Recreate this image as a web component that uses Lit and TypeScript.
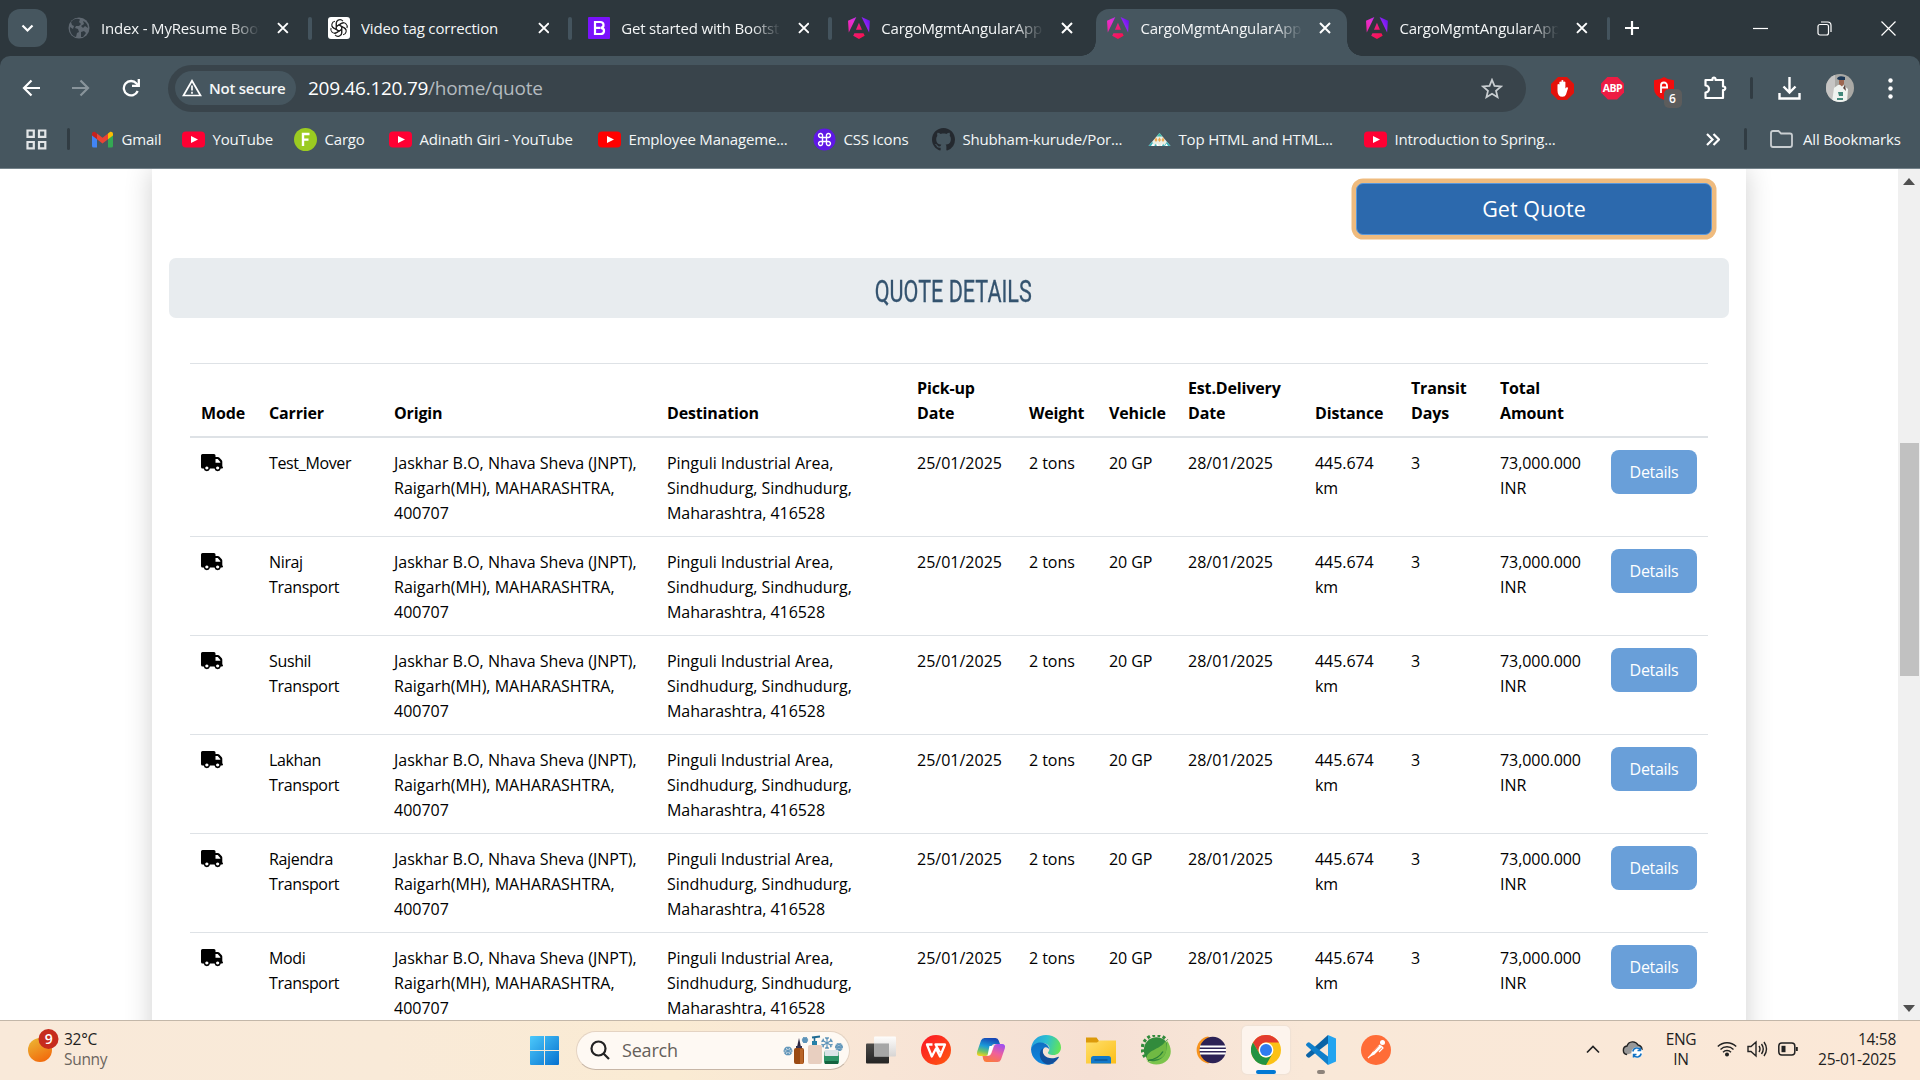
import { LitElement, html, css, svg } from "lit";
import { customElement } from "lit/decorators.js";

const X = svg`<path d="M1 1L11 11M11 1L1 11" stroke="#fff" stroke-width="2" fill="none"/>`;

const youtube = (c: string) => html`<svg class="bi" viewBox="0 0 23 23">
  <rect x="0" y="3.500" width="23" height="16" rx="4" fill=${c}></rect>
  <path d="M9 8l7 3.500-7 3.500z" fill="#fff"></path></svg>`;

const angular = html`<svg class="fav" viewBox="0 0 223 236" preserveAspectRatio="none">
  <defs><linearGradient id="g" gradientUnits="userSpaceOnUse" x1="0" y1="180" x2="223" y2="60">
    <stop offset="0" stop-color="#f0209c"></stop><stop offset=".4" stop-color="#e62fd0"></stop><stop offset=".7" stop-color="#a52cf5"></stop><stop offset="1" stop-color="#6a14f0"></stop></linearGradient>
    <linearGradient id="h" gradientUnits="userSpaceOnUse" x1="50" y1="100" x2="170" y2="220"><stop offset="0" stop-color="#e8228c"></stop><stop offset="1" stop-color="#fb0f4a"></stop></linearGradient></defs>
  <path fill="url(#g)" d="M222 39.200L214 165.100 137.400 0zM7.900 165.100L0 39.200 84.700 0z"></path>
  <path fill="url(#h)" d="M169 202l-58 33-58-33 11.800-28.500h92.300zM111 62.700l30.400 73.800H80.700z"></path></svg>`;

const globe = html`<svg class="fav" viewBox="0 0 22 22"><circle cx="11" cy="11" r="10.500" fill="#5f6871"></circle>
  <path d="M3 5C6 1 10 1.500 12 2.500L11 5l2 2-2 2H8l-1 2 3 1 1 3-2 1-1 4C4 19 1.500 15 2 10l3 2 1-3-2-1zM15 4c3 1 5 4 5 7l-3-2-2 2-2-2 3-2zM13 15l3-1 2 2-3 4-2 0z" fill="#2f3940"></path></svg>`;

const openai = html`<svg class="fav" viewBox="0 0 22 22"><rect width="22" height="22" rx="3" fill="#fff"></rect>
  <g fill="none" stroke="#222" stroke-width="1.100" stroke-linejoin="round">
  ${[0, 60, 120, 180, 240, 300].map(a => svg`<path transform="rotate(${a} 11 11)" d="M8.300 12.600V6.300a3.700 3.700 0 0 1 6.600-2.200M8.300 9.500l5.400-3.200a3.700 3.700 0 0 1 2.300-.5"/>`)}</g></svg>`;

const bootstrap = html`<svg class="fav" viewBox="0 0 22 22"><rect width="22" height="22" rx="1" fill="#7a12fb"></rect>
  <path d="M7 5h5.200c4.300 0 4.300 5.300.8 5.800 4.300.5 4 6.200-.7 6.200H7zM7 10.800h5.500" fill="none" stroke="#fff" stroke-width="2.200"></path></svg>`;

const TABS = [
  { icon: globe, title: "Index - MyResume Boot", fade: true },
  { icon: openai, title: "Video tag correction", fade: false },
  { icon: bootstrap, title: "Get started with Bootstr", fade: true },
  { icon: angular, title: "CargoMgmtAngularApp", fade: true },
  { icon: angular, title: "CargoMgmtAngularApp", fade: true, active: true },
  { icon: angular, title: "CargoMgmtAngularApp", fade: true },
];

const gmail = html`<svg class="bi" viewBox="0 0 23 23"><path d="M1 5v13q0 1.500 1.500 1.500H6V9z" fill="#4285f4"></path>
  <path d="M22 5v13q0 1.500-1.500 1.500H17V9z" fill="#34a853"></path>
  <path d="M6 5.500l5.500 4.300L17 5.500v5.800l-5.500 4.300L6 11.300z" fill="#ea4335"></path>
  <path d="M17 5.500l1.600-1.200C20 3.200 22 4 22 6v1.600l-5 3.700z" fill="#fbbc04"></path>
  <path d="M6 5.500L4.400 4.300C3 3.200 1 4 1 6v1.600l5 3.700z" fill="#c5221f"></path></svg>`;
const cargo = html`<svg class="bi" viewBox="0 0 23 23"><circle cx="11.500" cy="11.500" r="11.500" fill="#9bcb21"></circle>
  <path d="M9 18V6h6.500M9 11.600h5.500" fill="none" stroke="#fff" stroke-width="2.400"></path></svg>`;
const cssicon = html`<svg class="bi" viewBox="0 0 23 23"><circle cx="11.500" cy="11.500" r="11" fill="#5f17e6"></circle>
  <path d="M9.500 9.500V8a2 2 0 1 0-2 1.500h8a2 2 0 1 0-2-1.500v7a2 2 0 1 0 2-1.500h-8a2 2 0 1 0 2 1.500z" fill="none" stroke="#fff" stroke-width="1.400"></path></svg>`;
const github = html`<svg class="bi" viewBox="0 0 16 16"><path fill="#24292f" d="M8 0C3.580 0 0 3.580 0 8c0 3.540 2.290 6.530 5.470 7.590.4.070.55-.17.55-.38 0-.19-.01-.82-.01-1.490-2.010.37-2.530-.49-2.690-.94-.09-.23-.48-.94-.82-1.130-.28-.15-.68-.52-.01-.53.63-.01 1.080.58 1.230.82.72 1.210 1.870.87 2.330.66.07-.52.28-.87.51-1.070-1.780-.2-3.640-.89-3.640-3.950 0-.87.31-1.590.82-2.150-.08-.2-.36-1.020.08-2.120 0 0 .67-.21 2.200.82.64-.18 1.320-.27 2-.27s1.360.09 2 .27c1.530-1.040 2.200-.82 2.200-.82.44 1.100.16 1.920.08 2.120.51.56.82 1.270.82 2.150 0 3.070-1.870 3.750-3.650 3.950.29.25.54.73.54 1.480 0 1.070-.01 1.930-.01 2.200 0 .21.15.46.55.38A8.010 8.010 0 0 0 16 8c0-4.420-3.580-8-8-8z"></path></svg>`;
const hills = html`<svg class="bi" viewBox="0 0 23 23"><path d="M11.500 5L22.500 18H.500z" fill="#e9efe4"></path>
  <path d="M11.500 5l3 3.600h-6z" fill="#3fb6a8"></path><path d="M4 13.700l3 4.300H.500zM19 13.700l3.500 4.300H16z" fill="#3eb3b8"></path>
  <path d="M8 9.300l1.500 2.700L8 14l-1.500-2zM11.500 9.300l1.500 2.700-1.500 2-1.500-2zM15 9.300l1.500 2.700-1.500 2-1.500-2z" fill="#f0a850"></path><path d="M3 18l2-3 2 3zM8 18l1.500-2.500 1.500 2.500zM12.500 18l1.500-2.500 1.500 2.500zM17 18l1.500-2.500 1.500 2.500z" fill="#fff"></path><path d="M6.500 18l1.200-2.200 1.200 2.200zM14 18l1.200-2.200 1.200 2.200z" fill="#3eb3b8"></path></svg>`;

const BOOKMARKS = [
  { icon: gmail, text: "Gmail", w: 91 },
  { icon: youtube("#f03"), text: "YouTube", w: 112 },
  { icon: cargo, text: "Cargo", w: 95 },
  { icon: youtube("#f03"), text: "Adinath Giri - YouTube", w: 209 },
  { icon: youtube("#f00"), text: "Employee Manageme...", w: 215 },
  { icon: cssicon, text: "CSS Icons", w: 119 },
  { icon: github, text: "Shubham-kurude/Por...", w: 216 },
  { icon: hills, text: "Top HTML and HTML...", w: 216 },
  { icon: youtube("#f03"), text: "Introduction to Spring...", w: 200 },
];

const CARRIERS = [["Test_Mover"], ["Niraj", "Transport"], ["Sushil", "Transport"], ["Lakhan", "Transport"], ["Rajendra", "Transport"], ["Modi", "Transport"]];
const HEADS = [["Mode"], ["Carrier"], ["Origin"], ["Destination"], ["Pick-up", "Date"], ["Weight"], ["Vehicle"], ["Est.Delivery", "Date"], ["Distance"], ["Transit", "Days"], ["Total", "Amount"], [""]];
const lines = (a: string[]) => a.map(t => html`<div class="ln">${t}</div>`);

@customElement("browser-tabs")
class BrowserTabs extends LitElement {
  static styles = css`
    :host { display: flex; height: 56px; background: #2d373d; color: #f4f6f7; font: 15px "Open Sans", sans-serif; letter-spacing: -0.170px; }
    .drop { width: 39px; height: 38px; margin: 9px 5px 0 8px; border-radius: 12px; background: #46565f; display: grid; place-items: center; flex: none; }
    .tab { width: 260.100px; height: 56px; flex: none; display: flex; align-items: center; box-sizing: border-box; padding: 0 0 0 16px; }
    .fav { width: 22px; height: 22px; flex: none; margin-right: 11px; }
    .title { width: 166px; overflow: hidden; white-space: nowrap; }
    .fade { -webkit-mask-image: linear-gradient(90deg, #000 80%, transparent 98%); mask-image: linear-gradient(90deg, #000 80%, transparent 98%); }
    .close { width: 12px; height: 12px; margin-left: 14px; }
    .sep { width: 4px; height: 23px; margin-left: 19px; border-radius: 2px; background: #44545e; }
    .active { background: #46565f; height: 47px; margin: 9px 3px 0 4px; width: 251px; border-radius: 13px 13px 0 0; padding: 0 0 9px 11px; position: relative; }
    .active .close { margin-left: 13px; }
    .active::before, .active::after { content: ""; position: absolute; bottom: 0; width: 15px; height: 15px; }
    .active::before { left: -15px; background: radial-gradient(circle at 0 0, transparent 14.500px, #46565f 15px); }
    .active::after { right: -15px; background: radial-gradient(circle at 100% 0, transparent 14.500px, #46565f 15px); }
    .plus { margin: 20px 0 0 14px; width: 16px; height: 16px; }
    .wc { margin-left: auto; margin-right: 24px; display: flex; gap: 49px; align-items: center; }
  `;
  render() {
    return html`<div class="drop"><svg width="13" height="9" viewBox="0 0 13 9"><path d="M1.500 1.500l5 5 5-5" fill="none" stroke="#fff" stroke-width="2.200"></path></svg></div>
      ${TABS.map((t, i) => html`<div class="tab ${t.active ? "active" : ""}">${t.icon}<span class="title ${t.fade ? "fade" : ""}">${t.title}</span>
        <svg class="close" viewBox="0 0 12 12">${X}</svg>${i === 3 || t.active ? "" : html`<i class="sep"></i>`}</div>`)}
      <svg class="plus" viewBox="0 0 16 16"><path d="M8 1v14M1 8h14" stroke="#fff" stroke-width="2.200"></path></svg>
      <div class="wc">
        <svg width="15" height="15"><path d="M0 7.500h15" stroke="#fff" stroke-width="1.200"></path></svg>
        <svg width="15" height="15" fill="none" stroke="#fff" stroke-width="1.200"><rect x="1" y="3.500" width="10.500" height="10.500" rx="2"></rect><path d="M4 1h6.500q3.500 0 3.500 3.500V11"></path></svg>
        <svg width="15" height="15"><path d="M.500.500l14 14M14.500.500l-14 14" stroke="#fff" stroke-width="1.200"></path></svg>
      </div>`;
  }
}

@customElement("browser-toolbar")
class BrowserToolbar extends LitElement {
  static styles = css`
    :host { display: block; background: #2d373d; }
    .wrap { background: #46565f; border-radius: 10px 10px 0 0; height: 112px; border-bottom: 1px solid #74828a; display: flex; flex-direction: column; font-family: "Open Sans", sans-serif; color: #f4f6f7; }
    .nav { display: flex; height: 64px; align-items: center; flex: none; }
    .nav svg { flex: none; display: block; }
    .back { margin-left: 22px; } .fwd { margin-left: 30px; } .reload { margin-left: 32px; }
    .omni { width: 1358px; height: 47px; margin-left: 27px; background: #39444b; border-radius: 24px; display: flex; align-items: center; box-sizing: border-box; padding-left: 7px; flex: none; }
    .chip { width: 121px; height: 34px; border-radius: 17px; background: #46565f; display: flex; align-items: center; gap: 7px; box-sizing: border-box; padding-left: 7px; font-size: 15px; font-weight: 600; letter-spacing: -0.25px; white-space: nowrap; }
    .chip svg, .url { position: relative; }
    .url { margin-left: 12px; font-size: 19px; letter-spacing: -0.27px; white-space: nowrap; color: #b3babf; }
    .url b { font-weight: 400; color: #fff; }
    .star { margin-left: auto; margin-right: 23px; }
    .ext { display: grid; grid-template-columns: 50px 51px 51px 51px 22px 54px 48px 52px; margin-left: 11px; align-items: center; justify-items: center; }
    .abp { width: 23px; height: 23px; background: #ee1c43; clip-path: polygon(30% 0, 70% 0, 100% 30%, 100% 70%, 70% 100%, 30% 100%, 0 70%, 0 30%); font: 700 10.500px/22px "Open Sans", sans-serif; letter-spacing: -0.5px; text-align: center; color: #fff; }
    .shield { position: relative; }
    .six { position: absolute; left: 11px; top: 12px; width: 18px; height: 19px; border-radius: 5px; background: #5c5c5c; font: 600 12px/19px "Open Sans", sans-serif; text-align: center; color: #fff; }
    .v { width: 3px; height: 22px; background: #313c43; border-radius: 2px; }
    .marks { display: flex; height: 38px; align-items: center; font-size: 15px; letter-spacing: -0.18px; white-space: nowrap; }
    .apps { margin-left: 26px; } .v1 { margin: 0 20.500px 0 20px; }
    .bm { display: flex; align-items: center; flex: none; }
    .bi { width: 23px; height: 23px; flex: none; margin-right: 8px; }
    .more { margin-left: 142.500px; } .v2 { margin: 0 23px 0 24px; } .folder { margin-right: 10px; }
  `;
  render() {
    return html`<div class="wrap"><div class="nav">
      <svg class="back" width="19" height="18" fill="none" stroke="#fff" stroke-width="2.200"><path d="M18 9H2M9.500 1.500L2 9l7.500 7.500"></path></svg>
      <svg class="fwd" width="19" height="18" fill="none" stroke="#89949b" stroke-width="2.200"><path d="M1 9h16M9.500 1.500L17 9l-7.500 7.500"></path></svg>
      <svg class="reload" width="19" height="18" fill="none" stroke="#fff" stroke-width="2.300"><path d="M15.700 12A7.200 7.200 0 1 1 14.500 4.500L16 6"></path><path d="M16.800 0v6.800H10"></path></svg>
      <div class="omni"><div class="chip"><svg width="20" height="18" fill="none" stroke="#fff" stroke-width="1.700"><path d="M10 1.800L18.500 16.500h-17zM10 6.500v5M10 12.800v2"></path></svg>Not secure</div>
        <span class="url"><b>209.46.120.79</b>/home/quote</span>
        <svg class="star" width="22" height="21" viewBox="0 0 24 23"><path d="M12 2l2.700 6.700 7.300.6-5.600 4.700 1.700 7-6.100-3.800L5.900 21l1.700-7L2 9.300l7.300-.6z" fill="none" stroke="#c9ced1" stroke-width="1.900"></path></svg></div>
      <div class="ext">
        <svg width="23" height="23" viewBox="0 0 23 23"><path d="M7 0h9l7 7v9l-7 7H7l-7-7V7z" fill="#e3120b"></path><path d="M6.500 11V7.500q.9-1 1.900 0V5q1-1.200 2 0V3.600q1-1.200 2 0V5q1-1.100 2 0v6.500l1.200-1.200q1.500-.3 1.400 1L15 17.500q-.8 2.300-3.500 2.300-5 0-5-6z" fill="#fff"></path></svg>
        <div class="abp">ABP</div>
        <div class="shield"><svg width="22" height="23" viewBox="0 0 22 23"><path d="M11 0q4 3 10 3.300v8Q21 19 11 23 1 19 1 11.500V3.300Q7 3 11 0z" fill="#f20d0d"></path><path d="M8 10V8.500a3 3 0 0 1 6 0V11M8 16v-5.500h7" fill="none" stroke="#fff" stroke-width="1.800"></path></svg><span class="six">6</span></div>
        <svg width="24" height="24" viewBox="0 0 24 24" fill="none" stroke="#fff" stroke-width="2.200"><path d="M2.500 4H9.500V3a1.500 1.500 0 0 1 3 0v1H20v6.500h.500a1.800 1.800 0 0 1 0 3.600H20V22H2.500v-5.500a3.500 3.500 0 0 0 0-7z" stroke-linejoin="round"></path></svg>
        <i class="v"></i>
        <svg width="23" height="23" fill="none" stroke="#fff" stroke-width="2.400"><path d="M11.500 0v15M5.500 9.500l6 6 6-6M1.500 16v5.500h20V16"></path></svg>
        <svg width="28" height="28" viewBox="0 0 28 28"><defs><clipPath id="c"><circle cx="14" cy="14" r="14"></circle></clipPath></defs><g clip-path="url(#c)"><rect width="28" height="28" fill="#aaa9a5"></rect><path d="M0 0h9v28H0z" fill="#c6c5c4"></path><path d="M8 14l4-3h5l5 4-1 13H6z" fill="#eff3f0"></path><path d="M13 5h5v5l-2 2.500-3-2.500z" fill="#9d6650"></path><path d="M11 5q1-4 8-2v3h-6z" fill="#1d3856"></path><path d="M12 18h5v4h-4zM11 24h6v2h-6z" fill="#41877a"></path><path d="M17 14l2-3 1 6z" fill="#594640"></path></g></svg>
        <svg width="5" height="21" fill="#fff"><circle cx="2.500" cy="2.500" r="2.200"></circle><circle cx="2.500" cy="10.500" r="2.200"></circle><circle cx="2.500" cy="18.500" r="2.200"></circle></svg>
      </div></div>
      <div class="marks">
        <svg class="apps" width="21" height="21" fill="none" stroke="#e3e6e8" stroke-width="2.200"><path d="M1.500 1.500h6.300v6.300H1.500zM13 1.500h6.300v6.300H13zM1.500 13h6.300v6.300H1.500zM13 13h6.300v6.300H13z"></path></svg>
        <i class="v v1"></i>
        ${BOOKMARKS.map(b => html`<div class="bm" style="width:${b.w}px">${b.icon}<span>${b.text}</span></div>`)}
        <svg class="more" width="14" height="13" fill="none" stroke="#fff" stroke-width="2.200"><path d="M1 1l5.500 5.500L1 12M7.500 1L13 6.500 7.500 12"></path></svg>
        <i class="v v2"></i>
        <svg class="folder" width="23" height="18" fill="none" stroke="#c9ced1" stroke-width="1.800"><path d="M1 15V3q0-2 2-2h5.500L11 3.500h9q2 0 2 2V15q0 2-2 2H3q-2 0-2-2z"></path></svg>
        <span>All Bookmarks</span>
      </div></div>`;
  }
}

@customElement("quote-page")
class QuotePage extends LitElement {
  static styles = css`
    :host { display: flex; height: 851px; overflow: hidden; background: #fff; font-family: "Open Sans", sans-serif; color: #000; }
    .area { flex: 1; overflow: hidden; }
    .card { width: 1560px; height: 900px; margin-left: 152px; padding: 14px 17px 0; box-shadow: 0 0 26px rgba(0,0,0,.19); display: flex; flex-direction: column; }
    .get { align-self: flex-end; width: 356px; height: 52px; margin-right: 17px; box-sizing: border-box; border: 1px solid #5a98dc; border-radius: 7px; background: #2c69ad; box-shadow: 0 0 0 4.500px #efbb7e; color: #fff; font-size: 21.500px; line-height: 49px; text-align: center; }
    .bar { height: 60px; margin-top: 23px; border-radius: 7px; background: #e8ecef; display: grid; place-items: center; flex: none; }
    .bar span { font: 400 32px/60px Roboto, sans-serif; height: 60px; padding-top: 3px; box-sizing: border-box; color: #34536f; -webkit-text-stroke: .3px #34536f; transform: scaleX(.675); padding-left: 13px; white-space: nowrap; }
    table { margin: 45px 0 0 21px; width: 1518px; table-layout: fixed; border-collapse: separate; border-spacing: 0; font-size: 16px; letter-spacing: -0.06px; line-height: 25.200px; }
    th, td { text-align: left; vertical-align: top; padding: 12.800px 0 9.600px 11px; white-space: nowrap; border-bottom: 1px solid #dee2e6; height: 75.600px; }
    th { vertical-align: bottom; padding: 12px 0 9.400px 11px; border-top: 1px solid #dee2e6; border-bottom: 2px solid #dee2e6; height: 50.400px; font-weight: 700; letter-spacing: -0.15px; }
    .wide { letter-spacing: 0; }
    .tight { letter-spacing: -0.35px; }
    .btn { width: 86px; height: 44px; margin-top: -0.400px; border-radius: 8px; background: #699fd9; color: #fff; text-align: center; line-height: 44px; letter-spacing: -0.3px; }
    .truck { display: block; margin-top: 3px; }
    .scroll { width: 22px; background: #f0f0f0; display: flex; flex-direction: column; align-items: center; flex: none; box-sizing: border-box; padding: 9px 0 8px; }
    .thumb { width: 19px; height: 233px; background: #c1c1c1; margin: 258px 0 auto; }
  `;
  render() {
    const w = [68, 125, 273, 250, 112, 80, 79, 127, 96, 89, 111, 108];
    return html`<div class="area"><div class="card"><div class="get">Get Quote</div><div class="bar"><span>QUOTE DETAILS</span></div>
      <table><colgroup>${w.map(n => html`<col style="width:${n}px">`)}</colgroup>
      <thead><tr>${HEADS.map(h => html`<th>${lines(h)}</th>`)}</tr></thead>
      <tbody>${CARRIERS.map(c => html`<tr>
        <td><svg class="truck" width="22" height="18" viewBox="0 0 22 18"><path d="M1.500 0H13q1.500 0 1.500 1.500V3h2.300q1 0 1.700.7l2.300 2.500q.5.600.5 1.500V12.500q.7.200.7 1 0 1-1 1h-1.200a3.200 3.200 0 0 1-6.300 0H9a3.200 3.200 0 0 1-6.300 0H1.500Q0 14.500 0 13V1.500Q0 0 1.500 0zM14.500 5v3.700h4.800V8L16.700 5zM5.800 12.400a1.600 1.600 0 1 0 .1 0zM16.600 12.400a1.600 1.600 0 1 0 .1 0z" fill-rule="evenodd"></path></svg></td>
        <td class="tight">${lines(c)}</td><td class="wide">${lines(["Jaskhar B.O, Nhava Sheva (JNPT),", "Raigarh(MH), MAHARASHTRA,", "400707"])}</td>
        <td>${lines(["Pinguli Industrial Area,", "Sindhudurg, Sindhudurg,", "Maharashtra, 416528"])}</td>
        <td class="wide">25/01/2025</td><td>2 tons</td><td>20 GP</td><td class="wide">28/01/2025</td><td>${lines(["445.674", "km"])}</td><td>3</td><td>${lines(["73,000.000", "INR"])}</td>
        <td><div class="btn">Details</div></td></tr>`)}</tbody></table></div></div>
      <div class="scroll"><svg width="12" height="7"><path d="M0 7l6-7 6 7z" fill="#505050"></path></svg><div class="thumb"></div><svg width="12" height="7"><path d="M0 0l6 7 6-7z" fill="#505050"></path></svg></div>`;
  }
}

const flake = (x: number, y: number, r: number) => svg`<g transform="translate(${x} ${y})" stroke="#5c93b8" stroke-width="1.100" fill="none">${[0, 60, 120].map(a => svg`<path transform="rotate(${a})" d="M0 ${-r}V${r}M-1.800 ${-r + 0.500}L0 ${-r + 2.200} 1.800 ${-r + 0.500}M-1.800 ${r - 0.500}L0 ${r - 2.200} 1.800 ${r - 0.500}"/>`)}</g>`;

const APPS = [
  html`<svg viewBox="0 0 30 30"><defs><linearGradient id="t1" x1="0" y1="0" x2="0" y2="1"><stop offset="0" stop-color="#4b4a48"></stop><stop offset="1" stop-color="#242424"></stop></linearGradient><linearGradient id="t2" x1="0" y1="0" x2="0" y2="1"><stop offset="0" stop-color="#fff"></stop><stop offset="1" stop-color="#d4d3d3"></stop></linearGradient></defs><rect x="0" y="8.500" width="23" height="20" rx="1" fill="url(#t1)"></rect><rect x="8" y="1.500" width="22" height="20" rx="1" fill="url(#t2)" opacity=".92"></rect><path d="M8 8.500h15v13H8z" fill="#a6a6a6"></path></svg>`,
  html`<svg viewBox="0 0 30 30"><defs><linearGradient id="w" x1="0" y1="0" x2="1" y2="1"><stop offset="0" stop-color="#fb1426"></stop><stop offset="1" stop-color="#ff5a10"></stop></linearGradient></defs><circle cx="15" cy="15" r="15" fill="url(#w)"></circle><path d="M11.500 9.500H6L10.800 21.500l4.200-8 4 8L24 9.500h-9.500L19 17.500" fill="none" stroke="#fff" stroke-width="2.300" stroke-linejoin="round"></path></svg>`,
  html`<svg viewBox="0 0 30 30"><defs><linearGradient id="k1" x1=".5" y1="0" x2=".2" y2="1"><stop offset="0" stop-color="#1747b5"></stop><stop offset=".45" stop-color="#1b9bd9"></stop><stop offset=".75" stop-color="#6cc36b"></stop><stop offset="1" stop-color="#f5d31a"></stop></linearGradient><linearGradient id="k2" x1=".8" y1="0" x2=".3" y2="1"><stop offset="0" stop-color="#a04ff0"></stop><stop offset=".5" stop-color="#f0609a"></stop><stop offset="1" stop-color="#fb7a3c"></stop></linearGradient></defs><path d="M8.500 3h11q2.500 0 3.200 2.500L24 9h-5q-3 0-4 3l-2.500 7q-.8 2-3 2H4Q0 21 1.200 16.500L5 5.500Q6 3 8.500 3z" fill="url(#k1)"></path><path d="M21.500 27h-11q-2.500 0-3.200-2.500L6.500 21h5q3 0 4-3L18 11q.8-2 3-2h5q4 0 2.800 4.500L25 24.500Q24 27 21.500 27z" fill="url(#k2)"></path><path d="M13.500 11h4L15 18q-.8 2.500-3.500 2.500z" fill="#fff"></path></svg>`,
  html`<svg viewBox="0 0 30 30"><defs><linearGradient id="e1" x1="0" y1=".3" x2="1" y2=".5"><stop offset="0" stop-color="#249de0"></stop><stop offset=".5" stop-color="#2cc0cf"></stop><stop offset="1" stop-color="#63e457"></stop></linearGradient><linearGradient id="e2" x1="0" y1="0" x2="0" y2="1"><stop offset="0" stop-color="#0e6fc4"></stop><stop offset="1" stop-color="#1188e0"></stop></linearGradient></defs><path d="M0 14C1 5 7 0 15 0c9 0 15 6 15 12.500 0 5-4 7.500-7.500 7.500-4 0-6-1.500-5.500-2.500 1.500-2 2-3.500 1-6C16 7 6 6 0 14z" fill="url(#e1)"></path><path d="M0 14C3 7 10 6.500 14 8.500c3 1.500 4.500 4 4.500 6.500-1-2.500-4-3.500-5.500-2-3 3-1 9 3.500 12 3 2 6 2 7 3C13 33 0 26 0 14z" fill="url(#e2)"></path><path d="M12.500 13c-4.500 2-5 9-1 13.500 2 2 4.500 3.500 7 3 4-1 7-3.500 9.300-7 .3-.7-.3-1-1-.6C18 26 9 20 12.500 13z" fill="#124f9b"></path></svg>`,
  html`<svg viewBox="0 0 30 30"><path d="M0 2.500h10.500l2.500 3.500h16.500V9H0z" fill="#dc9a0a"></path><defs><linearGradient id="f" x1="0" y1="0" x2="1" y2="1"><stop offset="0" stop-color="#ffdf6c"></stop><stop offset="1" stop-color="#fcbf18"></stop></linearGradient></defs><path d="M0 7.500h11l2.500-2H30V28.500H0z" fill="url(#f)"></path><path d="M5 28.500v-5q0-2.500 2.500-2.500h15q2.500 0 2.500 2.500v5z" fill="#1279ca"></path><path d="M8.500 25h13" stroke="#0b5190" stroke-width="1.300"></path></svg>`,
  html`<svg viewBox="0 0 30 30"><circle cx="15.500" cy="15" r="12.700" fill="#328b3c"></circle><path d="M4 22A13.500 13.500 0 0 1 26 5.500" fill="none" stroke="#328b3c" stroke-width="3.200" stroke-dasharray="2.900 2.400"></path><path d="M6 25.500C3 15 20 15 24.500 6 26.500 12 26 21 19 23.500 14 25 9 24 6 25.500z" fill="#70b943"></path><path d="M25.500 5C31 12 31 20 26.500 25 21 31 10 31 5.500 25.500 13 28 22 25 24.500 18 26 14 26 9 25.500 5z" fill="#7cc44c"></path><path d="M7 25.500q10-1 15-9" fill="none" stroke="#2a8039" stroke-width="1.400"></path></svg>`,
  html`<svg viewBox="0 0 30 30"><path d="M12 1.500A13.700 13.700 0 0 0 12 28.500L16 26V4z" fill="#f7941e"></path><circle cx="16.800" cy="15" r="13.200" fill="#2c2255"></circle><path d="M4 11.500h25.800M3.500 15h26.500M4 18.500h25.800" stroke="#fff" stroke-width="2"></path></svg>`,
  html`<svg viewBox="0 0 30 30"><circle cx="15" cy="15" r="15" fill="#fbc116"></circle><path d="M2 7.500A15 15 0 0 1 28 7.500H15A7.500 7.500 0 0 0 8.500 18.700z" fill="#e33b2e"></path><path d="M2 7.500A15 15 0 0 0 15 30l6.500-11.300a7.500 7.500 0 0 1-13 0z" fill="#229342"></path><circle cx="15" cy="15" r="7.400" fill="#fff"></circle><circle cx="15" cy="15" r="6" fill="#2f7cf0"></circle></svg>`,
  html`<svg viewBox="0 0 30 30"><path d="M22 0v8.500L3.500 22.500Q2.500 23 1.500 22.300L.500 21.300Q-.5 20.300.5 19.300z" fill="#0a63a6"></path><path d="M22 30v-8.500L3.500 7.500Q2.500 7 1.500 7.700L.500 8.700Q-.5 9.700.5 10.700z" fill="#0f7fcb"></path><path d="M22 0l8 3.500v23L22 30z" fill="#23a4f0"></path></svg>`,
  html`<svg viewBox="0 0 30 30"><circle cx="15" cy="15" r="15" fill="#ff6c37"></circle><circle cx="21.500" cy="7.500" r="2.500" fill="#fff"></circle><path d="M18.500 9.500l3 2-8 8-5 2.500 3-5z" fill="#fff"></path><path d="M20 11l2 2-4 4M12 18l-5 5" stroke="#fff" stroke-width="1.200" fill="none"></path><path d="M17.500 11l-5 5.500" stroke="#ff6c37" stroke-width=".8"></path></svg>`,
];

@customElement("task-bar")
class TaskBar extends LitElement {
  static styles = css`
    :host { display: flex; height: 60px; box-sizing: border-box; border-top: 1px solid #c3b7a9; background: linear-gradient(90deg, #f9e9d9 0, #f9ead8 20%, #faebd3 35%, #f8e5d6 46%, #f5e0d4 57%, #f9e8d8 68%, #fbe8d7 100%); font: 15.500px "Open Sans", sans-serif; letter-spacing: -0.3px; color: #1f1f1f; align-items: center; white-space: nowrap; }
    .wx { margin-left: 27px; width: 37px; height: 36px; flex: none; margin-bottom: 8px; }
    .two { line-height: 20px; }
    .mute { color: #6b655e; }
    .left { width: 530px; display: flex; align-items: center; flex: none; padding-bottom: 3px; box-sizing: border-box; }
    .win { width: 29px; height: 29px; flex: none; }
    .search { width: 274px; height: 39px; box-sizing: border-box; margin: 0 0 1px 17px; border: 1px solid #e4d3c2; border-bottom-color: #c7b6a6; border-radius: 20px; background: #fef9f3; display: flex; align-items: center; padding: 0 6px 0 13px; font-size: 18px; color: #655f5a; flex: none; letter-spacing: -0.2px; }
    .search span { margin-left: 12px; flex: 1; }
    .apps { display: flex; margin-left: 7px; gap: 7px; flex: none; margin-bottom: 1px; }
    .app { width: 48px; height: 48px; border-radius: 5px; display: flex; flex-direction: column; align-items: center; box-sizing: border-box; padding-top: 9px; }
    .app svg { width: 30px; height: 30px; flex: none; }
    .on { background: #fdf4ed; box-shadow: 0 0 1px 1px #efe1d5; }
    .pill { width: 20px; height: 4px; border-radius: 2px; background: #0078d4; margin-top: 5px; }
    .dot { width: 8px; height: 4px; border-radius: 2px; background: #8d837b; margin-top: 5px; }
    .tray { margin-left: auto; margin-right: 24px; display: flex; align-items: center; padding-bottom: 3px; }
    .cloud { margin-left: 22px; }
    .tray .lang { width: 40px; text-align: center; margin: 0 16px 0 17px; }
    .tray .time { text-align: right; margin-left: 20px; width: 78px; display: flex; flex-direction: column; align-items: flex-end; }
  `;
  render() {
    return html`<div class="left">
      <svg class="wx" viewBox="0 0 37 36"><defs><linearGradient id="s" x1=".2" y1="0" x2=".7" y2="1"><stop offset="0" stop-color="#ecb533"></stop><stop offset="1" stop-color="#f2680b"></stop></linearGradient></defs><circle cx="13" cy="23" r="12" fill="url(#s)"></circle><circle cx="21.500" cy="12" r="10" fill="#c62b1d"></circle><text x="21.500" y="17" text-anchor="middle" font-family="Open Sans" font-weight="600" font-size="14" fill="#fff">9</text></svg>
      <div class="two"><div>32°C</div><div class="mute">Sunny</div></div></div>
      <svg class="win" viewBox="0 0 29 29"><defs><linearGradient id="m" gradientUnits="userSpaceOnUse" x1="0" y1="0" x2="29" y2="29"><stop offset="0" stop-color="#4cc9fb"></stop><stop offset="1" stop-color="#0671cf"></stop></linearGradient></defs><path d="M0 1q0-1 1-1h13v14H0zM15 0h13q1 0 1 1v13H15zM0 15h14v14H1q-1 0-1-1zM15 15h14v13q0 1-1 1H15z" fill="url(#m)"></path></svg>
      <div class="search"><svg width="20" height="20" fill="none" stroke="#222" stroke-width="2.200"><circle cx="8.500" cy="8.500" r="7"></circle><path d="M13.500 13.500l5.500 5.500"></path></svg><span>Search</span>
        <svg width="60" height="32" viewBox="0 0 60 32">
          ${flake(5, 17, 4.500)}${flake(22, 6, 3)}${flake(44, 9, 6)}${flake(56, 13, 4)}
          <path d="M14 13l2-9 2 9z" fill="#2b2540"></path><rect x="13" y="12" width="6" height="4" fill="#37304d"></rect><rect x="11" y="14" width="10" height="16" rx="2" fill="#9a4a13"></rect><path d="M17 15h3v15h-3z" fill="#b96528"></path>
          <path d="M29 3.500l8-1" stroke="#1f6b93" stroke-width="2"></path><path d="M31.500 3v7" stroke="#1f6b93" stroke-width="1.600"></path><rect x="29" y="7" width="5" height="4" fill="#2380a8"></rect><rect x="25" y="11" width="14" height="19" rx="2" fill="#e8cfc0"></rect>
          <rect x="41" y="17" width="15" height="13" rx="2" fill="#2d9366"></rect><rect x="41.500" y="16" width="14" height="6" rx="1" fill="#dbe4e8"></rect><path d="M42 27h13v3H42z" fill="#14633f"></path></svg></div>
      <div class="apps">${APPS.map((a, i) => html`<div class="app ${i === 7 ? "on" : ""}">${a}${i === 7 ? html`<i class="pill"></i>` : i === 8 ? html`<i class="dot"></i>` : ""}</div>`)}</div>
      <div class="tray">
        <svg width="14" height="9" fill="none" stroke="#222" stroke-width="1.700"><path d="M1 7.500l6-6 6 6"></path></svg>
        <svg width="22" height="18" viewBox="0 0 22 18" class="cloud"><path d="M5 14.500a4.300 4.300 0 0 1 0-8.500A6 6 0 0 1 16 5a5 5 0 0 1 4 5" fill="#989898" stroke="#222" stroke-width="1.400"></path><circle cx="15" cy="12.500" r="5.500" fill="#fff"></circle><path d="M10.800 11.500a4.200 4.200 0 0 1 7.700-1.500M18.500 7.500V10.500H15.500M19.200 13.500a4.200 4.200 0 0 1-7.700 1.500M11.500 17.500v-3h3" fill="none" stroke="#1473c4" stroke-width="1.500"></path></svg>
        <div class="two lang"><div>ENG</div><div>IN</div></div>
        <svg width="20" height="16" fill="none" stroke="#222" stroke-width="1.400"><path d="M.800 5.500a13 13 0 0 1 18.400 0M3.500 8.500a9.200 9.200 0 0 1 13 0M6 11.200a5.600 5.600 0 0 1 8 0"></path><circle cx="10" cy="13.500" r="1.300" fill="#222"></circle></svg>
        <svg width="31" height="18" viewBox="-10 0 31 18" fill="none" stroke="#222" stroke-width="1.400"><path d="M1 6.500h3L9 2v14l-5-4.500H1zM12 6q2 3 0 6M14.500 4q3.500 5 0 10M17 2q5 7 0 14"></path></svg>
        <svg width="30" height="14" viewBox="-10 0 30 14" fill="none" stroke="#222" stroke-width="1.500"><rect x=".800" y="1" width="16" height="12" rx="3"></rect><path d="M18.800 5v4" stroke-width="2"></path><rect x="3.500" y="3.800" width="4" height="6.400" fill="#222" stroke="none"></rect></svg>
        <div class="two time"><div>14:58</div><div>25-01-2025</div></div>
      </div>`;
  }
}

@customElement("app-root")
class AppRoot extends LitElement {
  static styles = css`:host { display: flex; flex-direction: column; width: 1920px; height: 1080px; overflow: hidden; }
    browser-tabs, browser-toolbar, quote-page, task-bar { flex: none; }`;
  render() {
    return html`<browser-tabs></browser-tabs><browser-toolbar></browser-toolbar><quote-page></quote-page><task-bar></task-bar>`;
  }
}
